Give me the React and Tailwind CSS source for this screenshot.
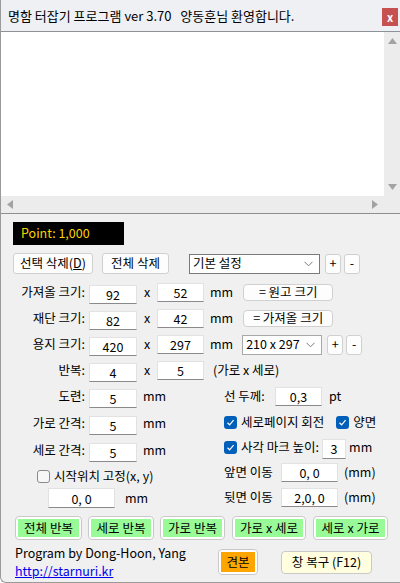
import React from 'react'

const Field = ({ value, w = 'w-[48px]', h = 'h-[19px]' }) => (
  <input
    readOnly
    value={value}
    className={`${w} ${h} bg-white border border-[#e2e2e2] border-b-[#8a8a8a] text-center text-[12.5px] leading-none outline-none`}
  />
)

const Btn = ({ children, className = '' }) => (
  <div className={`flex items-center justify-center bg-[#fdfdfd] border border-[#d0d0d0] rounded-[3px] text-[12.5px] leading-none whitespace-nowrap ${className}`}>
    {children}
  </div>
)

const Chevron = () => (
  <svg width="9" height="6" viewBox="0 0 9 6" className="shrink-0">
    <path d="M0.5 0.8 L4.5 4.8 L8.5 0.8" fill="none" stroke="#7a7a7a" strokeWidth="1" />
  </svg>
)

const Check = ({ on }) =>
  on ? (
    <div className="w-[13px] h-[13px] rounded-[3px] bg-[#005fb8] flex items-center justify-center shrink-0">
      <svg width="9" height="9" viewBox="0 0 9 9">
        <path d="M1.5 4.8 L3.6 6.8 L7.6 2.2" fill="none" stroke="white" strokeWidth="1.2" />
      </svg>
    </div>
  ) : (
    <div className="w-[13px] h-[13px] rounded-[3px] bg-[#f7f7f7] border border-[#8a8a8a] shrink-0" />
  )

const Label = ({ children }) => (
  <span className="w-[84px] text-right text-[12.5px] leading-none whitespace-nowrap">{children}</span>
)

const ColorBtn = ({ children, bg, className = '' }) => (
  <div className={`border border-[#c9c9c9] rounded-[4px] bg-white p-[2px] flex ${className}`}>
    <div className={`flex-1 flex items-center justify-center text-[12.5px] leading-none whitespace-nowrap ${bg}`}>{children}</div>
  </div>
)

export default function App() {
  return (
    <div className="w-[400px] h-[583px] bg-[#f0f0f0] flex flex-col overflow-hidden border-l border-b border-[#9a9a9a] rounded-bl-[6px] text-black font-['Noto_Sans_CJK_KR','Noto_Sans',sans-serif]">
      {/* title bar */}
      <div className="h-[32px] shrink-0 bg-[#eff0f4] flex justify-between border-b border-[#8d9198]">
        <span className="pl-[7px] pt-[9px] text-[13px] leading-none whitespace-pre">명함 터잡기 프로그램 ver 3.70   양동훈님 환영합니다.</span>
        <div className="w-[16px] h-[18px] mt-[8px] mr-[2px] bg-[#c75050] text-white text-[11px] font-bold flex items-center justify-center leading-none">x</div>
      </div>

      {/* text area */}
      <div className="flex flex-col shrink-0 border-b border-[#8f8f8f]">
        <div className="flex h-[164px]">
          <div className="flex-1 bg-white" />
          <div className="w-[16px] bg-[#ececec] flex flex-col justify-between items-center py-[6px]">
            <svg width="9" height="6" viewBox="0 0 9 6"><path d="M4.5 0 L9 6 L0 6 Z" fill="#a3a3a3" /></svg>
            <svg width="9" height="6" viewBox="0 0 9 6"><path d="M0 0 L9 0 L4.5 6 Z" fill="#a3a3a3" /></svg>
          </div>
        </div>
        <div className="flex h-[17px] bg-[#ececec]">
          <div className="flex-1 flex items-center justify-between px-[6px]">
            <svg width="6" height="9" viewBox="0 0 6 9"><path d="M0 4.5 L6 0 L6 9 Z" fill="#a3a3a3" /></svg>
            <svg width="6" height="9" viewBox="0 0 6 9"><path d="M0 0 L6 4.5 L0 9 Z" fill="#a3a3a3" /></svg>
          </div>
          <div className="w-[16px]" />
        </div>
      </div>

      {/* point */}
      <div className="mt-[8px] ml-[12px] w-[111px] h-[23px] bg-black text-[#ffd200] text-[12.5px] leading-none pl-[8px] flex items-center">
        Point: 1,000
      </div>

      {/* buttons row */}
      <div className="mt-[8px] ml-[12px] flex items-center h-[21px]">
        <Btn className="w-[80px] h-[21px]">선택 삭제(<span className="underline">D</span>)</Btn>
        <Btn className="w-[67px] h-[21px] ml-[9px]">전체 삭제</Btn>
        <div className="ml-[20px] w-[131px] h-[20px] bg-white border border-[#7a7a7a] flex items-center justify-between pl-[3px] pr-[6px] text-[12.5px] leading-none">
          <span>기본 설정</span>
          <Chevron />
        </div>
        <Btn className="ml-[5px] w-[16px] h-[20px]">+</Btn>
        <Btn className="ml-[3px] w-[16px] h-[20px]">-</Btn>
      </div>

      {/* size rows */}
      <div className="mt-[9px] flex flex-col gap-[7px]">
        <div className="flex items-center h-[19px]">
          <Label>가져올 크기:</Label>
          <div className="ml-[4px]"><Field value="92" /></div>
          <span className="w-[20px] text-center text-[12.5px] leading-none">x</span>
          <Field value="52" w="w-[47px]" />
          <span className="ml-[6px] text-[12.5px] leading-none">mm</span>
          <Btn className="ml-[10px] w-[90px] h-[17px] rounded-[4px]">= 원고 크기</Btn>
        </div>
        <div className="flex items-center h-[19px]">
          <Label>재단 크기:</Label>
          <div className="ml-[4px]"><Field value="82" /></div>
          <span className="w-[20px] text-center text-[12.5px] leading-none">x</span>
          <Field value="42" w="w-[47px]" />
          <span className="ml-[6px] text-[12.5px] leading-none">mm</span>
          <Btn className="ml-[10px] w-[90px] h-[17px] rounded-[4px]">= 가져올 크기</Btn>
        </div>
        <div className="flex items-center h-[19px]">
          <Label>용지 크기:</Label>
          <div className="ml-[4px]"><Field value="420" /></div>
          <span className="w-[20px] text-center text-[12.5px] leading-none">x</span>
          <Field value="297" w="w-[47px]" />
          <span className="ml-[6px] text-[12.5px] leading-none">mm</span>
          <div className="ml-[9px] w-[80px] h-[20px] bg-white border border-[#a8a8a8] flex items-center justify-between pl-[3px] pr-[6px] text-[12.5px] leading-none">
            <span>210 x 297</span>
            <Chevron />
          </div>
          <Btn className="ml-[5px] w-[16px] h-[20px]">+</Btn>
          <Btn className="ml-[3px] w-[16px] h-[20px]">-</Btn>
        </div>
        <div className="flex items-center h-[19px]">
          <Label>반복:</Label>
          <div className="ml-[4px]"><Field value="4" /></div>
          <span className="w-[20px] text-center text-[12.5px] leading-none">x</span>
          <Field value="5" w="w-[47px]" />
          <span className="ml-[9px] text-[12.5px] leading-none">(가로 x 세로)</span>
        </div>
      </div>

      {/* two columns */}
      <div className="mt-[7px] flex">
        <div className="w-[199px] flex flex-col">
          <div className="flex items-center h-[19px]">
            <Label>도련:</Label>
            <div className="ml-[4px]"><Field value="5" /></div>
            <span className="ml-[6px] text-[12.5px] leading-none">mm</span>
          </div>
          <div className="mt-[8px] flex items-center h-[19px]">
            <Label>가로 간격:</Label>
            <div className="ml-[4px]"><Field value="5" /></div>
            <span className="ml-[6px] text-[12.5px] leading-none">mm</span>
          </div>
          <div className="mt-[8px] flex items-center h-[19px]">
            <Label>세로 간격:</Label>
            <div className="ml-[4px]"><Field value="5" /></div>
            <span className="ml-[6px] text-[12.5px] leading-none">mm</span>
          </div>
          <div className="mt-[9px] ml-[36px] flex items-center h-[14px] gap-[4px]">
            <Check />
            <span className="text-[12.5px] leading-none whitespace-nowrap">시작위치 고정(x, y)</span>
          </div>
          <div className="mt-[5px] ml-[47px] flex items-center h-[20px]">
            <Field value="0, 0" w="w-[67px]" h="h-[20px]" />
            <span className="ml-[10px] text-[12.5px] leading-none">mm</span>
          </div>
        </div>

        <div className="flex-1 flex flex-col pl-[24px]">
          <div className="flex items-center h-[19px]">
            <span className="w-[51px] text-[12.5px] leading-none whitespace-nowrap">선 두께:</span>
            <Field value="0,3" w="w-[47px]" />
            <span className="ml-[7px] text-[12.5px] leading-none">pt</span>
          </div>
          <div className="mt-[10px] flex items-center h-[13px] whitespace-nowrap">
            <Check on />
            <span className="ml-[4px] text-[12.5px] leading-none">세로페이지 회전</span>
            <div className="ml-[12px]"><Check on /></div>
            <span className="ml-[4px] text-[12.5px] leading-none">양면</span>
          </div>
          <div className="mt-[8px] flex items-center h-[20px] whitespace-nowrap">
            <Check on />
            <span className="ml-[4px] text-[12.5px] leading-none">사각 마크 높이:</span>
            <div className="ml-[3px]"><Field value="3" w="w-[24px]" h="h-[20px]" /></div>
            <span className="ml-[3px] text-[12.5px] leading-none">mm</span>
          </div>
          <div className="mt-[6px] flex items-center h-[19px] whitespace-nowrap">
            <span className="w-[57px] text-[12.5px] leading-none">앞면 이동</span>
            <Field value="0, 0" w="w-[57px]" />
            <span className="ml-[6px] text-[12.5px] leading-none">(mm)</span>
          </div>
          <div className="mt-[6px] flex items-center h-[19px] whitespace-nowrap">
            <span className="w-[57px] text-[12.5px] leading-none">뒷면 이동</span>
            <Field value="2,0, 0" w="w-[57px]" />
            <span className="ml-[6px] text-[12.5px] leading-none">(mm)</span>
          </div>
        </div>
      </div>

      {/* green buttons */}
      <div className="mt-[8px] ml-[14px] flex h-[24px]">
        <ColorBtn bg="bg-[#98fb98]" className="w-[67px]">전체 반복</ColorBtn>
        <ColorBtn bg="bg-[#98fb98]" className="w-[66px] ml-[6px]">세로 반복</ColorBtn>
        <ColorBtn bg="bg-[#98fb98]" className="w-[65px] ml-[6px]">가로 반복</ColorBtn>
        <ColorBtn bg="bg-[#98fb98]" className="w-[74px] ml-[7px]">가로 x 세로</ColorBtn>
        <ColorBtn bg="bg-[#98fb98]" className="w-[75px] ml-[7px]">세로 x 가로</ColorBtn>
      </div>

      {/* footer */}
      <div className="mt-[6px] flex items-start">
        <div className="w-[217px] pl-[14px] flex flex-col gap-[4px] text-[12.5px] leading-[14px]">
          <span>Program by Dong-Hoon, Yang</span>
          <span className="text-[#0000ee] underline">http://starnuri.kr</span>
        </div>
        <ColorBtn bg="bg-[#ffa500]" className="w-[40px] h-[26px] mt-[3px]">견본</ColorBtn>
        <div className="ml-[23px] mt-[5px] w-[91px] h-[23px] border border-[#c9c9c9] rounded-[4px] bg-[#ffffe0] flex items-center justify-center text-[12.5px] leading-none">
          창 복구 (F12)
        </div>
      </div>
    </div>
  )
}
